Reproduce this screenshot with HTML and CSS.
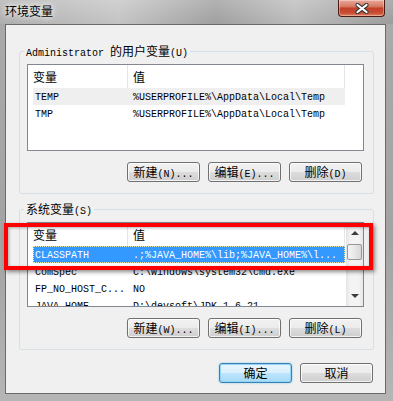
FILE: index.html
```html
<!DOCTYPE html>
<html>

<head>
  <meta http-equiv="Content-Type" content="text/html; charset=UTF-8">
  <title>环境变量</title>
  <link rel="stylesheet" href="styles.css">
</head>

<body>

  <div class="ventana">

    <div class="barra">
      <span class="titulo zh">环境变量</span>
      <div class="cerrar">
        <svg width="14" height="11" viewBox="0 0 14 11">
          <path d="M2.5 2 L11.5 9 M11.5 2 L2.5 9" stroke="#3a3a3a" stroke-width="4.2" stroke-linecap="round" />
          <path d="M2.5 2 L11.5 9 M11.5 2 L2.5 9" stroke="#fff" stroke-width="2.2" stroke-linecap="round" />
        </svg>
      </div>
    </div>

    <div class="cliente">

      <!-- variables de usuario -->
      <fieldset class="grupo">
        <legend>Administrator <span class="zh">的用户变量</span>(U)</legend>
        <div class="lista">
          <div class="contenido">
            <div class="cabecera">
              <div class="h1 zh">变量</div>
              <div class="h2 zh">值</div>
            </div>
            <div class="fila inactiva">
              <div class="c1">TEMP</div>
              <div class="c2">%USERPROFILE%\AppData\Local\Temp</div>
            </div>
            <div class="fila">
              <div class="c1">TMP</div>
              <div class="c2">%USERPROFILE%\AppData\Local\Temp</div>
            </div>
          </div>
        </div>
        <div class="botones">
          <button class="boton"><span class="zh">新建</span>(N)...</button>
          <button class="boton"><span class="zh">编辑</span>(E)...</button>
          <button class="boton"><span class="zh">删除</span>(D)</button>
        </div>
      </fieldset>

      <!-- variables del sistema -->
      <fieldset class="grupo sistema">
        <legend><span class="zh">系统变量</span>(S)</legend>
        <div class="lista corta">
          <div class="contenido">
            <div class="cabecera">
              <div class="h1 zh">变量</div>
              <div class="h2 zh">值</div>
            </div>
            <div class="fila sel">
              <div class="c1">CLASSPATH</div>
              <div class="c2">.;%JAVA_HOME%\lib;%JAVA_HOME%\l...</div>
            </div>
            <div class="fila">
              <div class="c1">ComSpec</div>
              <div class="c2">C:\Windows\system32\cmd.exe</div>
            </div>
            <div class="fila">
              <div class="c1">FP_NO_HOST_C...</div>
              <div class="c2">NO</div>
            </div>
            <div class="fila">
              <div class="c1">JAVA_HOME</div>
              <div class="c2">D:\devsoft\JDK_1.6.21</div>
            </div>
          </div>
          <div class="desplaza">
            <div class="flecha"><span class="tri arriba"></span></div>
            <div class="pulgar"></div>
            <div class="hueco"></div>
            <div class="flecha"><span class="tri abajo"></span></div>
          </div>
        </div>
        <div class="botones">
          <button class="boton"><span class="zh">新建</span>(W)...</button>
          <button class="boton"><span class="zh">编辑</span>(I)...</button>
          <button class="boton"><span class="zh">删除</span>(L)</button>
        </div>
      </fieldset>

      <div class="botones final">
        <button class="boton defecto"><span class="zh">确定</span></button>
        <button class="boton"><span class="zh">取消</span></button>
      </div>

    </div>

    <!-- marca roja encima de la lista -->
    <div class="marca"></div>

  </div>

</body>

</html>
```

FILE: styles.css
```css
* {
  box-sizing: border-box;
}

body {
  margin: 0;
  font: 10px/17px "Liberation Mono", "Noto Sans CJK SC", monospace;
  color: #000;
}

.zh {
  font-family: "Noto Sans CJK SC", sans-serif;
  font-size: 12px;
}

.ventana {
  position: relative;
  width: 393px;
  height: 401px;
  padding: 0 7px 7px 5px;
  display: flex;
  flex-direction: column;
  background: linear-gradient(180deg, #bdbdbd 0, #a9a9a9 24px, #a3a3a3 60%, #b5b5b5 100%);
}

.barra {
  height: 24px;
  display: flex;
  align-items: flex-start;
  margin: 0 -7px 0 -5px;
  padding: 0 8px 0 5px;
  background: linear-gradient(90deg, rgba(255, 255, 255, 0.05), rgba(255, 255, 255, 0.3) 30%, rgba(0, 0, 0, 0.06) 55%, rgba(255, 255, 255, 0.2) 75%, rgba(0, 0, 0, 0.08));
}

.titulo {
  padding-top: 3px;
  line-height: 16px;
  text-shadow: 0 0 5px #fff, 0 0 8px #fff;
}

.cerrar {
  margin-left: auto;
  width: 47px;
  height: 17px;
  display: flex;
  align-items: center;
  justify-content: center;
  border: 1px solid #4a1c14;
  border-top: 0;
  border-radius: 0 0 4px 4px;
  background: linear-gradient(180deg, #e9a99a 0, #d77a62 40%, #c2412a 52%, #c64c33 80%, #e0805f 100%);
  box-shadow: inset 0 0 0 1px rgba(255, 255, 255, 0.35);
}

.cliente {
  flex: 1;
  border: 1px solid #6a6a6a;
  background: #f0f0f0;
  padding: 0 11px 0 13px;
}

.grupo {
  margin: 19px 0 0;
  min-width: 0;
  border: 1px solid #d5dfe5;
  border-radius: 3px;
  padding: 6px 9px 11px 7px;
}

.grupo legend {
  margin-left: -3px;
  padding: 0 2px;
  height: 14px;
  line-height: 14px;
}

.sistema {
  margin-top: 8px;
}

.lista {
  display: flex;
  height: 87px;
  border: 1px solid #828790;
  background: #fff;
  overflow: hidden;
}

.corta {
  height: 85px;
}

.contenido {
  flex: 1;
}

.cabecera {
  display: flex;
  height: 23px;
}

.cabecera div {
  padding: 1px 0 0 5px;
  line-height: 22px;
  border-right: 1px solid #e3e5e8;
}

.h1 {
  width: 100px;
}

.h2 {
  width: 217px;
}

.fila {
  display: flex;
  margin-left: 5px;
  width: 312px;
  height: 17px;
  line-height: 19px;
  white-space: nowrap;
}

.c1 {
  width: 94px;
  padding-left: 2px;
}

.c2 {
  flex: 1;
  padding-left: 6px;
  overflow: hidden;
}

.inactiva {
  background: #efefef;
}

.sel {
  background: #3399ff;
  color: #fff;
  outline: 1px dotted #e8e8b0;
  outline-offset: -1px;
}

.desplaza {
  width: 17px;
  display: flex;
  flex-direction: column;
  background: linear-gradient(90deg, #e4e4e4, #f4f4f4 25%, #f4f4f4 75%, #e6e6e6);
}

.flecha {
  height: 20px;
  display: flex;
  align-items: center;
  justify-content: center;
}

.tri {
  width: 0;
  height: 0;
  border-left: 4px solid transparent;
  border-right: 4px solid transparent;
}

.arriba {
  border-bottom: 4px solid #3c3c3c;
}

.abajo {
  border-top: 4px solid #3c3c3c;
}

.pulgar {
  height: 16px;
  margin: 1px 1px 0;
  border: 1px solid #979797;
  border-radius: 2px;
  background: linear-gradient(90deg, #f4f4f4, #e8e8e8 50%, #d8d8d8);
}

.hueco {
  flex: 1;
}

.botones {
  display: flex;
  justify-content: flex-end;
  gap: 8px;
  margin-top: 11px;
  padding-right: 2px;
}

.final {
  margin-top: 13px;
  padding-right: 1px;
}

.boton {
  width: 73px;
  height: 20px;
  padding: 0;
  font: 10px/18px "Liberation Mono", monospace;
  color: #000;
  border: 1px solid #707070;
  border-radius: 3px;
  background: linear-gradient(180deg, #f2f2f2 0, #ebebeb 50%, #dddddd 50%, #cfcfcf 100%);
  box-shadow: inset 0 0 0 1px rgba(255, 255, 255, 0.75);
}

.defecto {
  border-color: #3c7fb1;
  background: linear-gradient(180deg, #eaf6fd 0, #d9f0fc 50%, #bee6fd 50%, #a7d9f5 100%);
  box-shadow: inset 0 0 0 1px #90d5f7, 0 0 2px #6fc5f0;
}

.marca {
  position: absolute;
  left: 4px;
  top: 223px;
  width: 369px;
  height: 47px;
  border: 4px solid #ff0000;
  box-shadow: 2px 2px 4px rgba(0, 0, 0, 0.45), inset 1px 1px 3px rgba(0, 0, 0, 0.3);
}
```
